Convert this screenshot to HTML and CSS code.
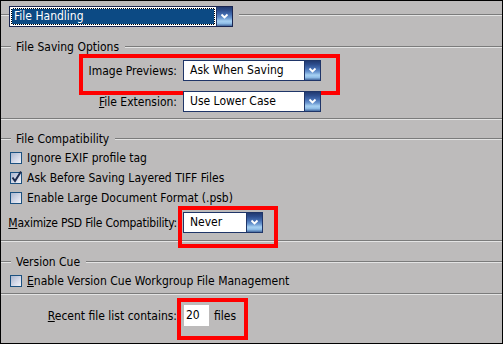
FILE: index.html
```html
<!DOCTYPE html>
<html lang="en">
<head>
    <meta charset="UTF-8">
    <title>Preferences - File Handling</title>
    <link rel="stylesheet" href="styles.css">
</head>
<body>
    <div class="panel">

        <!-- page selector -->
        <div class="hdr top">
            <span class="ln lead"></span>
            <div class="sel sel-main">
                <span class="val focus">File Handling</span>
                <span class="btn"><svg width="15" height="19" viewBox="0 0 15 19"><polyline points="4.5,7.5 7.5,10.5 10.5,7.5" fill="none" stroke="#fff" stroke-width="1.8"/></svg></span>
            </div>
            <span class="ln"></span>
        </div>

        <!-- File Saving Options -->
        <div class="hdr sect s1"><span class="ln lead"></span><span class="ttl">File Saving Options</span><span class="ln"></span></div>

        <div class="field f-prev mark mark-prev">
            <label class="lbl">Image Previews:</label>
            <div class="sel w138">
                <span class="val">Ask When Saving</span>
                <span class="btn"><svg width="15" height="19" viewBox="0 0 15 19"><polyline points="4.5,7.5 7.5,10.5 10.5,7.5" fill="none" stroke="#fff" stroke-width="1.8"/></svg></span>
            </div>
        </div>
        <div class="field f-ext">
            <label class="lbl"><u>F</u>ile Extension:</label>
            <div class="sel w138">
                <span class="val">Use Lower Case</span>
                <span class="btn"><svg width="15" height="19" viewBox="0 0 15 19"><polyline points="4.5,7.5 7.5,10.5 10.5,7.5" fill="none" stroke="#fff" stroke-width="1.8"/></svg></span>
            </div>
        </div>

        <div class="sep sep1"></div>

        <!-- File Compatibility -->
        <div class="hdr sect s2"><span class="ln lead"></span><span class="ttl">File Compatibility</span><span class="ln"></span></div>

        <div class="chk first"><span class="box"></span>Ignore EXIF profile tag</div>
        <div class="chk"><span class="box"><svg width="12" height="12" viewBox="0 0 12 12"><polyline points="2.5,5.5 5,9 11,-0.5" fill="none" stroke="#1d2b4d" stroke-width="2"/></svg></span>Ask Before Saving Layered TIFF Files</div>
        <div class="chk"><span class="box"></span>Enable Large Document Format (.psb)</div>

        <div class="field f-max mark mark-max">
            <label class="lbl tight"><u>M</u>aximize PSD File Compatibility:</label>
            <div class="sel w80">
                <span class="val">Never</span>
                <span class="btn"><svg width="15" height="19" viewBox="0 0 15 19"><polyline points="4.5,7.5 7.5,10.5 10.5,7.5" fill="none" stroke="#fff" stroke-width="1.8"/></svg></span>
            </div>
        </div>

        <div class="sep sep2"></div>

        <!-- Version Cue -->
        <div class="hdr sect s3"><span class="ln lead"></span><span class="ttl">Version Cue</span><span class="ln"></span></div>

        <div class="chk first"><span class="box"></span><span><u>E</u>nable Version Cue Workgroup File Management</span></div>

        <div class="sep sep3"></div>

        <div class="field f-recent mark mark-recent">
            <label class="lbl"><u>R</u>ecent file list contains:</label>
            <span class="num">20</span>
            <span class="unit">files</span>
        </div>

    </div>
</body>
</html>
```

FILE: styles.css
```css
* {
    box-sizing: border-box;
}
body {
    margin: 0;
    font-family: "DejaVu Sans Condensed", "DejaVu Sans", sans-serif;
    font-stretch: condensed;
    font-size: 12px;
    color: #000;
}
.panel {
    width: 503px;
    height: 344px;
    border: 1px solid #000;
    background: #bdbbbb;
    overflow: hidden;
}

/* groove lines */
.ln, .sep {
    height: 2px;
    border-top: 1px solid #7b7b7b;
    border-bottom: 1px solid #e4e4e4;
}
.ln {
    flex: 1;
}
.ln.lead {
    flex: 0 0 10px;
}

.hdr {
    display: flex;
    align-items: center;
}
.top {
    align-items: flex-start;
    padding-top: 5px;
}
.top .ln {
    margin-top: 8px;
}
.top .lead {
    flex-basis: 8px;
}
.sect {
    height: 14px;
}
.ttl {
    padding: 0 6px 0 5px;
    line-height: 14px;
    white-space: nowrap;
}
.s1 { margin-top: 13px; }
.s2 { margin-top: 12px; }
.s3 { margin-top: 13px; }

/* combo boxes */
.sel {
    display: flex;
    height: 21px;
    border: 1px solid #1f3568;
    background: #fff;
}
.sel-main {
    width: 224px;
    margin-right: 6px;
    border-color: #1a2550;
}
.w138 { width: 138px; }
.w80 { width: 80px; }
.val {
    flex: 1;
    padding-left: 6px;
    line-height: 19px;
    white-space: nowrap;
}
.val.focus {
    margin: 1px;
    padding-left: 2px;
    line-height: 15px;
    color: #fff;
    border: 1px dotted #fff;
    background: linear-gradient(#0c4a84, #0c4a84) padding-box, linear-gradient(#000, #000) border-box;
}
.btn {
    width: 16px;
    height: 19px;
    border-left: 1px solid #1f3568;
    background: linear-gradient(to bottom, #223a70 0%, #2c4c8c 18%, #456eb2 40%, #6a97d0 58%, #a6d0f2 74%, #92c0ea 86%, #45699f 100%);
}
.btn svg {
    display: block;
}

/* rows */
.field {
    display: flex;
    align-items: center;
    position: relative;
}
.lbl {
    width: 176px;
    margin-right: 6px;
    text-align: right;
    white-space: nowrap;
}
.lbl.tight {
    letter-spacing: -0.22px;
}
.f-prev { margin-top: 6px; }
.f-ext { margin-top: 10px; }
.f-max { margin-top: 4px; }
.f-recent { margin-top: 10px; }

.sep1 { margin-top: 6px; }
.sep2 { margin-top: 7px; }
.sep3 { margin-top: 2px; }

.chk {
    display: flex;
    align-items: center;
    height: 20px;
    padding-left: 9px;
    white-space: nowrap;
}
.chk.first {
    margin-top: 2px;
}
.box {
    width: 12px;
    height: 12px;
    margin-right: 5px;
    border: 1px solid #1c5180;
    background: linear-gradient(135deg, #aab6ce 0%, #d8dcea 60%, #f2f3f8 100%);
}
.box svg {
    display: block;
    margin: -1px;
    overflow: visible;
}

.num {
    width: 25px;
    height: 21px;
    margin-left: 1px;
    padding-left: 2px;
    line-height: 21px;
    background: #fff;
}
.unit {
    margin-left: 5px;
}

/* red call-out frames drawn over the dialog */
.mark::after {
    content: "";
    position: absolute;
    border: 4px solid #ff0000;
}
.mark-prev::after {
    left: 78px;
    top: -6px;
    width: 253px;
    height: 33px;
}
.mark-max::after {
    left: 177px;
    top: -6px;
    width: 92px;
    height: 34px;
}
.mark-recent::after {
    left: 176px;
    top: -7px;
    width: 63px;
    height: 34px;
}
```
